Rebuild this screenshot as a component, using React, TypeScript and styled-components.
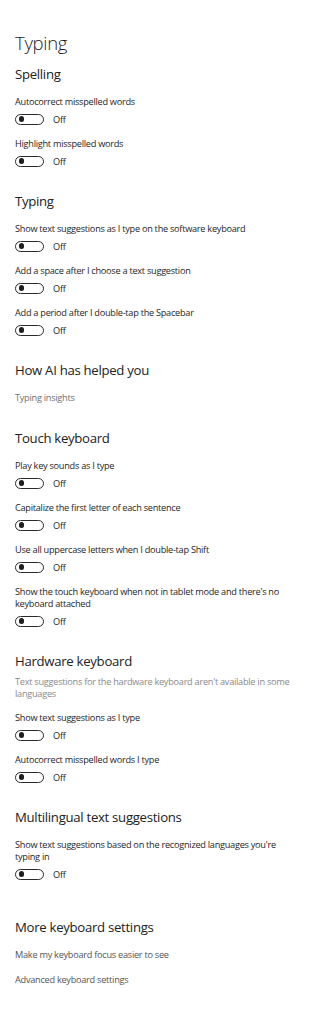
import React from 'react';
import styled, { createGlobalStyle } from 'styled-components';

const GlobalStyle = createGlobalStyle`
  html, body {
    margin: 0;
    padding: 0;
    background: #ffffff;
  }
  body {
    font-family: 'Open Sans', 'Noto Sans', 'Liberation Sans', sans-serif;
    color: #1b1b1b;
  }
`;

const Page = styled.div`
  width: 328px;
  min-height: 1024px;
  box-sizing: border-box;
  padding: 30px 15px 0 15px;
  background: #ffffff;
`;

const Title = styled.h1`
  margin: 0;
  font-size: 18.5px;
  line-height: 26px;
  font-weight: 300;
  letter-spacing: -0.3px;
  color: #1b1b1b;
`;

const Section = styled.section<{ $gap?: number }>`
  display: flex;
  flex-direction: column;
  margin-top: ${(p) => (p.$gap ?? 24)}px;
`;

const Heading = styled.h2`
  margin: 0 0 12px 0;
  font-size: 13.2px;
  line-height: 20px;
  font-weight: 400;
  letter-spacing: -0.3px;
  color: #222222;
`;

const Note = styled.p`
  margin: -7px 0 12px 0;
  font-size: 9.2px;
  line-height: 12px;
  letter-spacing: -0.27px;
  color: #8a8a8a;
  padding-right: 20px;
`;

const Setting = styled.div`
  display: flex;
  flex-direction: column;
  gap: 6px;
  & + & {
    margin-top: 13px;
  }
`;

const Label = styled.div`
  font-size: 9.2px;
  line-height: 12px;
  letter-spacing: -0.27px;
  color: #262626;
  padding-right: 20px;
`;

const ToggleRow = styled.div`
  display: flex;
  align-items: center;
  gap: 9px;
  height: 11px;
`;

const Track = styled.span`
  position: relative;
  display: inline-block;
  box-sizing: border-box;
  width: 29px;
  height: 11px;
  border: 1.5px solid #2a2a2a;
  border-radius: 6px;
  background: #ffffff;
`;

const Knob = styled.span`
  position: absolute;
  left: 2.5px;
  top: 1.2px;
  width: 5.5px;
  height: 5.5px;
  border-radius: 50%;
  background: #1f1f1f;
`;

const State = styled.span`
  font-size: 9.2px;
  line-height: 11px;
  letter-spacing: -0.27px;
  color: #262626;
`;

const Link = styled.div<{ $tone?: 'light' | 'dark' }>`
  font-size: 9.2px;
  line-height: 12px;
  letter-spacing: -0.27px;
  color: ${(p) => (p.$tone === 'light' ? '#707070' : '#555555')};
  & + & {
    margin-top: 13px;
  }
`;

function Toggle({ label }: { label: string }) {
  return (
    <Setting>
      <Label>{label}</Label>
      <ToggleRow>
        <Track>
          <Knob />
        </Track>
        <State>Off</State>
      </ToggleRow>
    </Setting>
  );
}

export default function App() {
  return (
    <>
      <GlobalStyle />
      <Page>
        <Title>Typing</Title>

        <Section $gap={8}>
          <Heading>Spelling</Heading>
          <Toggle label="Autocorrect misspelled words" />
          <Toggle label="Highlight misspelled words" />
        </Section>

        <Section>
          <Heading>Typing</Heading>
          <Toggle label="Show text suggestions as I type on the software keyboard" />
          <Toggle label="Add a space after I choose a text suggestion" />
          <Toggle label="Add a period after I double-tap the Spacebar" />
        </Section>

        <Section>
          <Heading>How AI has helped you</Heading>
          <Link $tone="light">Typing insights</Link>
        </Section>

        <Section>
          <Heading>Touch keyboard</Heading>
          <Toggle label="Play key sounds as I type" />
          <Toggle label="Capitalize the first letter of each sentence" />
          <Toggle label="Use all uppercase letters when I double-tap Shift" />
          <Toggle label="Show the touch keyboard when not in tablet mode and there's no keyboard attached" />
        </Section>

        <Section>
          <Heading>Hardware keyboard</Heading>
          <Note>Text suggestions for the hardware keyboard aren't available in some languages</Note>
          <Toggle label="Show text suggestions as I type" />
          <Toggle label="Autocorrect misspelled words I type" />
        </Section>

        <Section>
          <Heading>Multilingual text suggestions</Heading>
          <Toggle label="Show text suggestions based on the recognized languages you're typing in" />
        </Section>

        <Section $gap={37}>
          <Heading>More keyboard settings</Heading>
          <Link>Make my keyboard focus easier to see</Link>
          <Link>Advanced keyboard settings</Link>
        </Section>
      </Page>
    </>
  );
}
